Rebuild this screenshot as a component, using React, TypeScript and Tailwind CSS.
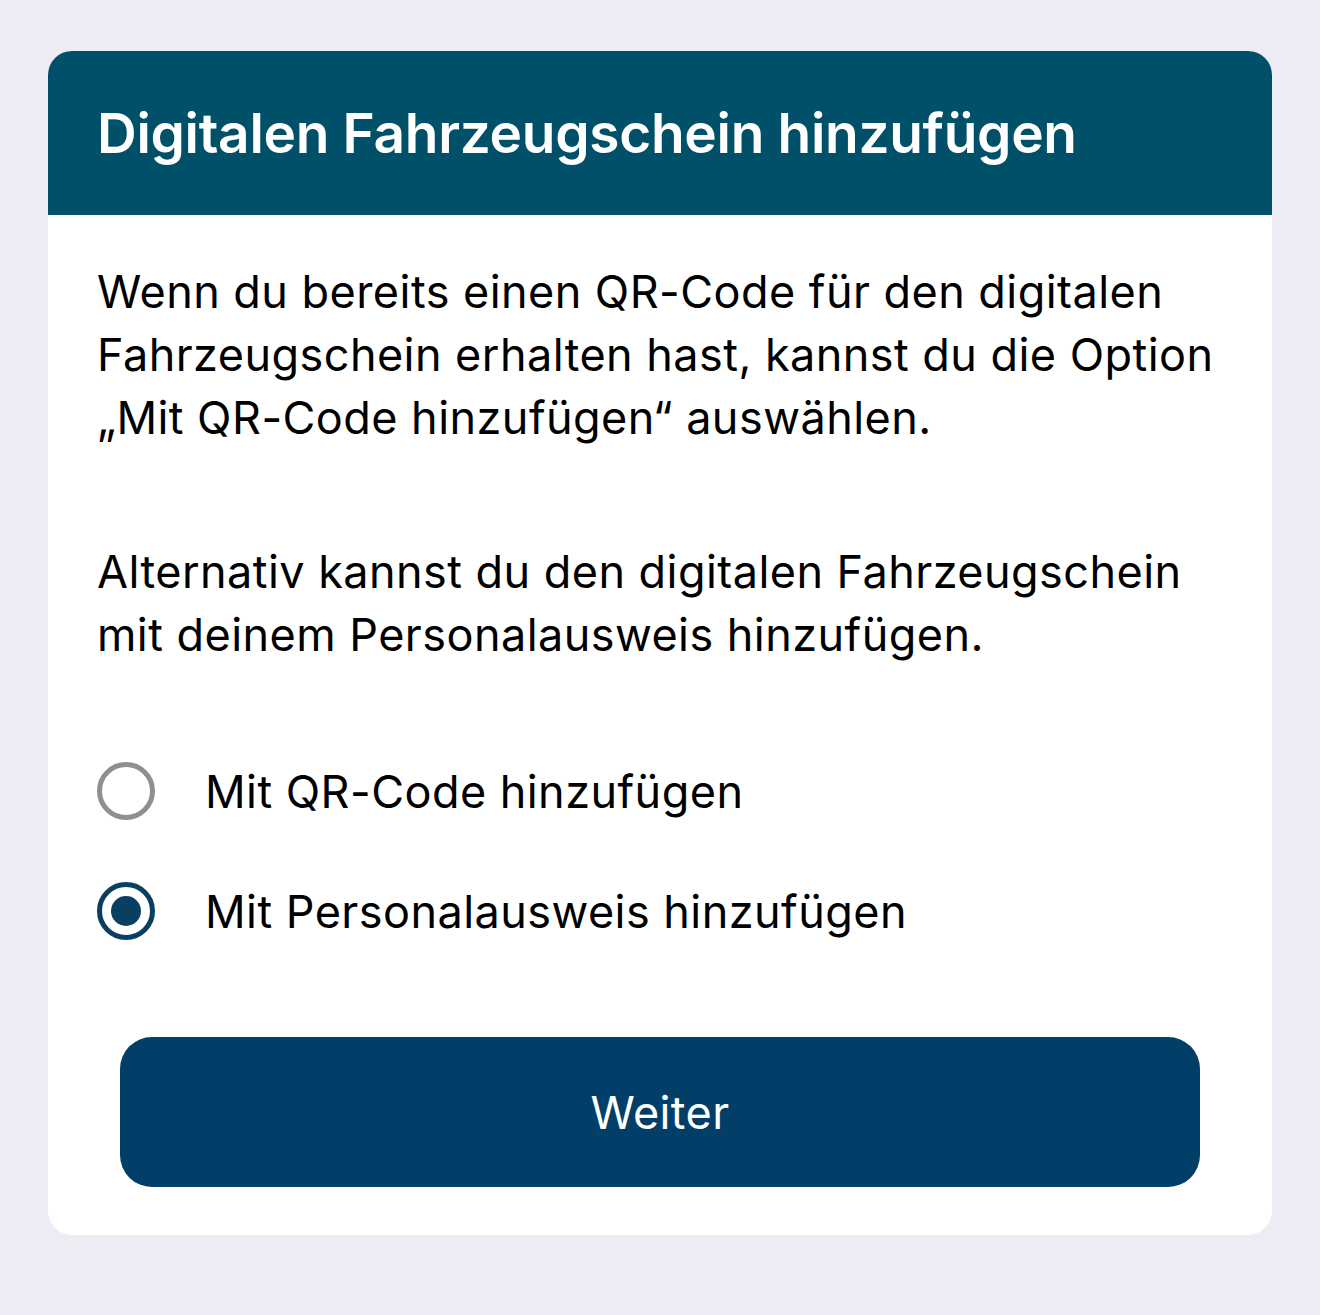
import React, { useState } from 'react';

const options = [
  { id: 'qr', label: 'Mit QR-Code hinzufügen' },
  { id: 'ausweis', label: 'Mit Personalausweis hinzufügen' },
];

export default function App() {
  const [selected, setSelected] = useState('ausweis');

  return (
    <div className="min-h-[1315px] bg-[#edecf5] px-12 pt-[51px] font-['Inter',sans-serif]">
      <div className="overflow-hidden rounded-[24px] bg-white">
        {/* Header */}
        <div className="flex h-[164px] items-center bg-[#00506a] px-[49px]">
          <h1 className="text-[55px] font-semibold leading-none tracking-[-0.3px] text-white">
            Digitalen Fahrzeugschein hinzufügen
          </h1>
        </div>

        {/* Body */}
        <div className="px-[49px] pt-[45px] pb-12 text-[45px] leading-[63px] tracking-[0.45px] text-black">
          <p>
            Wenn du bereits einen QR-Code für den digitalen Fahrzeugschein erhalten hast, kannst du die Option
            „Mit QR-Code hinzufügen“ auswählen.
          </p>
          <p className="mt-[91px]">
            Alternativ kannst du den digitalen Fahrzeugschein mit deinem Personalausweis hinzufügen.
          </p>

          <div className="mt-[96px] flex flex-col gap-[62px]">
            {options.map((o) => {
              const active = selected === o.id;
              return (
                <button
                  key={o.id}
                  onClick={() => setSelected(o.id)}
                  className="flex h-[58px] items-center gap-[50px] text-left"
                >
                  <span
                    className={`flex h-[58px] w-[58px] shrink-0 items-center justify-center rounded-full border-[5px] ${
                      active ? 'border-[#0b3f62]' : 'border-[#8e8e93]'
                    }`}
                  >
                    {active && <span className="h-[30px] w-[30px] rounded-full bg-[#0b3f62]" />}
                  </span>
                  <span>{o.label}</span>
                </button>
              );
            })}
          </div>

          <div className="mt-[97px] px-[23px]">
            <button className="flex h-[150px] w-full items-center justify-center rounded-[32px] bg-[#023f68] text-[45px] tracking-[0.4px] text-white">
              Weiter
            </button>
          </div>
        </div>
      </div>
    </div>
  );
}
